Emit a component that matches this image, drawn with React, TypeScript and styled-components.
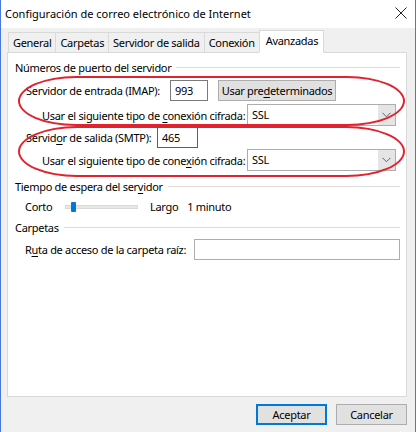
import React from 'react';
import styled, { createGlobalStyle } from 'styled-components';

const GlobalStyle = createGlobalStyle`
    *, *::before, *::after {
        box-sizing: border-box;
    }
    html, body {
        margin: 0;
        padding: 0;
        background: #ffffff;
    }
    body {
        font-family: "Noto Sans", "Segoe UI", sans-serif;
        font-size: 11px;
        letter-spacing: -0.3px;
        color: #000000;
    }
`;

const Window = styled.div`
    width: 416px;
    height: 432px;
    display: flex;
    flex-direction: column;
    border-left: 1px solid #4a78d6;
    border-right: 1px solid #4a78d6;
    background: #f0f0f0;
`;

const TitleBar = styled.div`
    height: 28px;
    flex: none;
    display: flex;
    align-items: center;
    justify-content: space-between;
    padding: 0 8px 2px 4px;
    background: #ffffff;
    font-size: 11px;
    letter-spacing: 0;
`;

const Body = styled.div`
    flex: 1;
    display: flex;
    flex-direction: column;
    padding: 2px 8px 0 6px;
`;

const Tabs = styled.div`
    display: flex;
    align-items: flex-end;
    height: 23px;
    padding-left: 2px;
    margin-bottom: -1px;
    position: relative;
    z-index: 1;
`;

const Tab = styled.div<{ $active?: boolean }>`
    height: ${(p) => (p.$active ? '23px' : '21px')};
    padding: ${(p) => (p.$active ? '1px 5px 0 6px' : '1px 4px 0 4px')};
    margin-left: -1px;
    border: 1px solid #d9d9d9;
    border-bottom: ${(p) => (p.$active ? '1px solid #ffffff' : '1px solid #d9d9d9')};
    background: ${(p) => (p.$active ? '#ffffff' : '#f0f0f0')};
    line-height: 17px;
    white-space: nowrap;
`;

const Panel = styled.div`
    height: 345px;
    background: #ffffff;
    border: 1px solid #d9d9d9;
    padding: 6px 6px 0 7px;
`;

const GroupHeading = styled.div<{ $h: number }>`
    display: flex;
    align-items: center;
    height: ${(p) => p.$h}px;
    white-space: nowrap;

    &::after {
        content: '';
        flex: 1;
        height: 1px;
        margin-left: 5px;
        background: #dcdcdc;
    }
`;

const Row = styled.div<{ $h: number; $indent: number }>`
    display: flex;
    align-items: center;
    height: ${(p) => p.$h}px;
    padding-left: ${(p) => p.$indent}px;
    white-space: nowrap;
`;

const Label = styled.span<{ $w?: number }>`
    width: ${(p) => (p.$w ? `${p.$w}px` : 'auto')};
    flex: none;
`;

const Ul = styled.span`
    text-decoration: underline;
    text-underline-offset: 2px;
`;

const TextBox = styled.div<{ $w: number; $border?: string }>`
    width: ${(p) => p.$w}px;
    height: 21px;
    padding: 0 0 0 4px;
    border: 1px solid ${(p) => p.$border ?? '#7a7a7a'};
    background: #ffffff;
    line-height: 19px;
    flex: none;
`;

const Button = styled.div<{ $w: number; $default?: boolean; $gap?: number }>`
    width: ${(p) => p.$w}px;
    height: 21px;
    margin-left: ${(p) => p.$gap ?? 0}px;
    display: flex;
    align-items: center;
    justify-content: center;
    border: 1px solid ${(p) => (p.$default ? '#0078d7' : '#adadad')};
    box-shadow: ${(p) => (p.$default ? 'inset 0 0 0 1px #0078d7' : 'none')};
    background: #e1e1e1;
    flex: none;
`;

const Select = styled.div`
    width: 149px;
    height: 22px;
    display: flex;
    align-items: stretch;
    border: 1px solid #adadad;
    background: #ffffff;
    margin-left: auto;
    margin-right: 4px;
    flex: none;
`;

const SelectValue = styled.div`
    flex: 1;
    padding-left: 4px;
    line-height: 20px;
`;

const SelectArrow = styled.div`
    width: 17px;
    display: flex;
    align-items: center;
    justify-content: center;
    background: #e5e5e5;
`;

const Annotated = styled.div<{ $top: number; $bottom: number }>`
    position: relative;

    &::after {
        content: '';
        position: absolute;
        left: 3px;
        right: -5px;
        top: ${(p) => p.$top}px;
        bottom: ${(p) => p.$bottom}px;
        border: 2px solid #e0232f;
        border-radius: 60px / 26px;
        pointer-events: none;
    }
`;

const Track = styled.div`
    position: relative;
    width: 73px;
    height: 4px;
    margin-right: 12px;
    background: #e7e7e7;
    border: 1px solid #dadada;
    flex: none;
`;

const Thumb = styled.div`
    position: absolute;
    left: 5px;
    top: -4px;
    width: 5px;
    height: 10px;
    background: #0078d7;
    border-radius: 1px;
`;

const Footer = styled.div`
    display: flex;
    justify-content: flex-end;
    gap: 9px;
    padding-top: 7px;
`;

const Chevron = () => (
    <svg width="9" height="6" viewBox="0 0 9 6">
        <path d="M0.5 0.8 L4.5 4.8 L8.5 0.8" fill="none" stroke="#606060" strokeWidth="1" />
    </svg>
);

const CloseIcon = () => (
    <svg width="12" height="12" viewBox="0 0 12 12">
        <path d="M0.5 0.5 L11.5 11.5 M11.5 0.5 L0.5 11.5" stroke="#222222" strokeWidth="1" />
    </svg>
);

const App: React.FC = () => {
    const tabs = ['General', 'Carpetas', 'Servidor de salida', 'Conexión'];

    return (
        <>
            <GlobalStyle />
            <Window>
                <TitleBar>
                    <span>Configuración de correo electrónico de Internet</span>
                    <CloseIcon />
                </TitleBar>
                <Body>
                    <Tabs>
                        {tabs.map((t) => (
                            <Tab key={t}>{t}</Tab>
                        ))}
                        <Tab $active>Avanzadas</Tab>
                    </Tabs>
                    <Panel>
                        <GroupHeading $h={16}>Números de puerto del servidor</GroupHeading>
                        <Annotated $top={1} $bottom={-1}>
                            <Row $h={30} $indent={11}>
                                <Label $w={144}>Servidor de entrada (IMAP):</Label>
                                <TextBox $w={38}>993</TextBox>
                                <Button $w={118} $gap={10}>
                                    <span>
                                        Usar pre<Ul>d</Ul>eterminados
                                    </span>
                                </Button>
                            </Row>
                            <Row $h={20} $indent={27}>
                                <Label>
                                    Usar el siguiente tipo de <Ul>c</Ul>onexión cifrada:
                                </Label>
                                <Select>
                                    <SelectValue>SSL</SelectValue>
                                    <SelectArrow>
                                        <Chevron />
                                    </SelectArrow>
                                </Select>
                            </Row>
                        </Annotated>
                        <Annotated $top={1} $bottom={-7}>
                            <Row $h={25} $indent={11}>
                                <Label $w={131}>
                                    Servid<Ul>o</Ul>r de salida (SMTP):
                                </Label>
                                <TextBox $w={41} $border="#0078d7">
                                    465
                                </TextBox>
                            </Row>
                            <Row $h={20} $indent={27}>
                                <Label>
                                    Usar el siguiente tipo de cone<Ul>x</Ul>ión cifrada:
                                </Label>
                                <Select>
                                    <SelectValue>SSL</SelectValue>
                                    <SelectArrow>
                                        <Chevron />
                                    </SelectArrow>
                                </Select>
                            </Row>
                        </Annotated>
                        <GroupHeading $h={32}>
                            <span>
                                Tiempo de espera del ser<Ul>v</Ul>idor
                            </span>
                        </GroupHeading>
                        <Row $h={9} $indent={10}>
                            <Label $w={40}>Corto</Label>
                            <Track>
                                <Thumb />
                            </Track>
                            <Label>Largo</Label>
                            <Label style={{ marginLeft: 9 }}>1 minuto</Label>
                        </Row>
                        <GroupHeading $h={32}>Carpetas</GroupHeading>
                        <Row $h={12} $indent={10}>
                            <Label $w={169}>
                                R<Ul>u</Ul>ta de acceso de la carpeta raíz:
                            </Label>
                            <TextBox $w={206} $border="#adadad" />
                        </Row>
                    </Panel>
                    <Footer>
                        <Button $w={71} $default>
                            Aceptar
                        </Button>
                        <Button $w={71}>Cancelar</Button>
                    </Footer>
                </Body>
            </Window>
        </>
    );
};

export default App;
